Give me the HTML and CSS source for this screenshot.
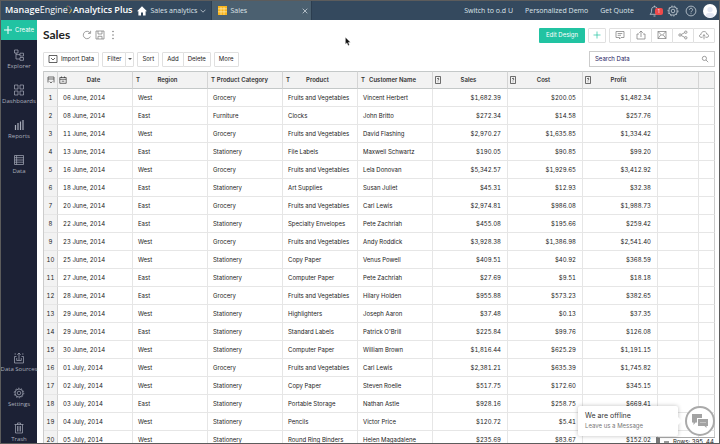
FILE: index.html
```
<!DOCTYPE html>
<html lang="en">
<head>
  <meta charset="UTF-8">
  <meta name="viewport" content="width=device-width, initial-scale=1">
  <title>Sales - Analytics Plus</title>
  <link rel="stylesheet" href="styles.css">
</head>
<body>

  <header class="topbar">
    <a class="brand" href="#"><span>Manage</span><span class="brand-light">Engine</span><svg class="brand-arc" viewBox="0 0 10 12"><path d="M1 3 A5 5 0 0 1 4 1" stroke="#2f9e5b"/><path d="M3 1 Q6 1 7 4" stroke="#d9433b"/><path d="M5 1 Q8 2 8 6" stroke="#2d8fc4"/><path d="M8 5 Q8 9 5 10" stroke="#f0c237"/></svg><span>Analytics Plus</span></a>
    <a class="home" href="#" aria-label="Home"><svg viewBox="0 0 10 10"><path d="M5 0.3 L10 5.2 H8.6 V9.6 H6 V6.5 H4 V9.6 H1.4 V5.2 H0 Z" fill="#fff"/></svg></a>
    <button class="workspace">Sales analytics <svg viewBox="0 0 6 4"><path d="M0.5 0.7 L3 3.2 L5.5 0.7"/></svg></button>
    <div class="tab">
      <svg class="tab-icon" viewBox="0 0 9 9"><rect width="9" height="9" fill="#f9b51c"/><path d="M0 2.8 H9 M0 5.8 H9 M3 1 V9 M6 1 V9" stroke="#fff0c2" stroke-width=".6"/></svg>
      <span>Sales</span>
      <button class="tab-close" aria-label="Close tab"><svg viewBox="0 0 6 6"><path d="M0.7 0.7 L5.3 5.3 M5.3 0.7 L0.7 5.3"/></svg></button>
    </div>
    <nav class="top-links">
      <a href="#">Switch to o.d U</a>
      <a href="#">Personalized Demo</a>
      <a href="#">Get Quote</a>
    </nav>
    <div class="top-icons">
      <button class="bell" aria-label="Notifications"><svg viewBox="0 0 12 12"><path d="M1 9.3 H10 C8.6 8 8.6 7 8.6 5 C8.6 3 7.5 1.8 5.5 1.8 C3.5 1.8 2.6 3 2.6 5 C2.6 7 2.5 8 1 9.3 Z M4.5 11 H6.5 M5.5 .6 V1.8"/></svg><span class="badge">1</span></button>
      <button aria-label="Settings"><svg viewBox="0 0 12 12"><circle cx="6" cy="6" r="4.1"/><circle cx="6" cy="6" r="1.8"/><circle class="teeth" cx="6" cy="6" r="5"/></svg></button>
      <button aria-label="Help"><svg viewBox="0 0 12 12"><circle cx="6" cy="6" r="4.9"/><path d="M4.4 4.8 C4.4 2.7 7.6 2.7 7.6 4.7 C7.6 6 6 5.9 6 7.3 M6 8.3 V9.1"/></svg></button>
      <button class="avatar" aria-label="Account"><svg viewBox="0 0 14 14"><circle cx="7" cy="7" r="7" fill="#fff"/><circle cx="7" cy="5.5" r="2.6" fill="#e4e8f3"/><path d="M2.5 12 Q3 8.8 7 8.8 Q11 8.8 11.5 12 Q7 15 2.5 12" fill="#e4e8f3"/></svg></button>
    </div>
  </header>

  <div class="layout">
    <aside class="sidebar">
      <button class="create"><svg viewBox="0 0 8 8"><path d="M4 0 V8 M0 4 H8"/></svg>Create</button>
      <nav class="side-nav">
        <a href="#"><svg viewBox="0 0 12 12"><path d="M1.5 1 H5 V4 H1.5 Z M7 4.2 H10.5 V7 H7 Z M7 8.5 H10.5 V11.3 H7 Z M3 4 V10 H7 M3 5.6 H7"/></svg>Explorer</a>
        <a href="#"><svg viewBox="0 0 12 12"><path d="M1.5 1 H5 V5 H1.5 Z M7 1 H10.5 V5 H7 Z M1.5 7 H5 V11 H1.5 Z M7 7 H10.5 V11 H7 Z"/></svg>Dashboards</a>
        <a href="#"><svg viewBox="0 0 12 12"><path class="bars" d="M2.5 11 V6 M5 11 V4 M7.5 11 V2.5 M10 11 V1"/></svg>Reports</a>
        <a href="#"><svg viewBox="0 0 12 12"><path d="M1.5 1.5 H10.5 V10.5 H1.5 Z M1.5 3.7 H10.5 M1.5 6 H10.5 M1.5 8.2 H10.5 M3.6 1.5 V10.5"/></svg>Data</a>
      </nav>
      <nav class="side-nav side-bottom">
        <a href="#"><svg viewBox="0 0 12 12"><path d="M3.5 4.5 H1.5 V11 H10.5 V4.5 H8.5 M6 1 V8 M4.3 2.7 L6 1 L7.7 2.7 M3.7 6 V8.5 H8.3 V6 M1.5 2 H3 M9 2 H10.5"/></svg>Data Sources</a>
        <a href="#"><svg viewBox="0 0 12 12"><circle cx="6" cy="6" r="4"/><circle cx="6" cy="6" r="1.8"/><circle class="teeth" cx="6" cy="6" r="4.8"/></svg>Settings</a>
        <a href="#"><svg viewBox="0 0 12 12"><path d="M1.5 2.5 H10.5 M4.5 2.5 V1 H7.5 V2.5 M2.5 2.5 V11 H9.5 V2.5 M4.5 4 V9.5 M6 4 V9.5 M7.5 4 V9.5"/></svg>Trash</a>
      </nav>
    </aside>

    <main class="content">
      <div class="title-row">
        <h1>Sales</h1>
        <div class="title-icons">
          <button aria-label="Refresh"><svg viewBox="0 0 10 10"><path d="M8.4 6.5 A3.7 3.7 0 1 1 8 2.8 M8.6 .8 V3.4 H6"/></svg></button>
          <button aria-label="Save"><svg viewBox="0 0 10 10"><path d="M1 1 H9 V9 H1 Z M3 1 V4 H7 V1 M3 9 V6.3 H7 V9"/></svg></button>
          <button aria-label="More options"><svg viewBox="0 0 10 10"><path class="dots" d="M5 1.5 H5.01 M5 5 H5.01 M5 8.5 H5.01"/></svg></button>
        </div>
        <div class="actions">
          <button class="edit">Edit Design</button>
          <button class="btn add" aria-label="Add"><svg viewBox="0 0 10 10"><path d="M5 1.5 V8.5 M1.5 5 H8.5"/></svg></button>
          <div class="group">
            <button class="btn" aria-label="Comments"><svg viewBox="0 0 10 10"><path d="M1 1.5 H9 V7.5 H6 L4.5 9 V7.5 H1 Z M2.7 3.5 H7.3 M2.7 5.3 H6"/></svg></button>
            <button class="btn" aria-label="Export"><svg viewBox="0 0 10 10"><path d="M3 4 H1 V9 H9 V4 H7 M5 7 V1 M3.2 2.8 L5 1 L6.8 2.8"/></svg></button>
            <button class="btn" aria-label="Email"><svg viewBox="0 0 10 10"><path d="M1 1.5 H9 V8.5 H1 Z M1 1.5 L5 5.5 L9 1.5 M1 8.5 L4 4.7 M9 8.5 L6 4.7"/></svg></button>
            <button class="btn" aria-label="Share"><svg viewBox="0 0 10 10"><circle cx="2" cy="5" r="1.2"/><circle cx="7.8" cy="2.2" r="1.2"/><circle cx="7.8" cy="7.8" r="1.2"/><path d="M3.1 4.5 L6.7 2.7 M3.1 5.5 L6.7 7.3"/></svg></button>
            <button class="btn" aria-label="Publish"><svg viewBox="0 0 10 10"><path d="M3.5 7.3 H2 C0 7.3 0 4.4 2.1 4.4 C2.1 .6 7.7 .6 7.8 4.2 C10.2 4.2 10.2 7.3 8 7.3 H6.5 M5 9.3 V4.7 M3.6 6 L5 4.7 L6.4 6"/></svg></button>
          </div>
        </div>
      </div>

      <div class="toolbar">
        <button class="btn import"><svg viewBox="0 0 10 10"><path d="M1 1.5 H9 V8.5 H1 Z M3 4 L5 6 L7 4"/></svg>Import Data</button>
        <div class="group">
          <button class="btn">Filter</button>
          <button class="btn caret" aria-label="Filter options"></button>
        </div>
        <button class="btn">Sort</button>
        <div class="group">
          <button class="btn">Add</button>
          <button class="btn">Delete</button>
        </div>
        <button class="btn">More</button>
        <label class="search">
          <input type="search" placeholder="Search Data" aria-label="Search Data">
          <svg viewBox="0 0 8 8"><circle cx="3.4" cy="3.4" r="2.1"/><path d="M5 5 L7.2 7.2"/></svg>
        </label>
      </div>

      <div class="grid">
        <table>
          <colgroup><col class="c-num"><col><col><col><col><col><col><col><col><col class="c-blank"><col class="c-end"></colgroup>
          <thead>
            <tr>
              <th class="num" aria-label="Row"><svg viewBox="0 0 8 8"><path d="M1 6.5 V1 H7 V6.5 M1 3 H7 M2.7 5.5 L4 7 L5.3 5.5"/></svg></th>
              <th><div><svg viewBox="0 0 8 8"><path d="M.8 1.5 H7.2 V7.3 H.8 Z M.8 3.3 H7.2 M2.5 .5 V2 M5.5 .5 V2 M2.7 5.2 H5.3"/></svg><span>Date</span></div></th>
              <th><div><i>T</i><span>Region</span></div></th>
              <th><div><i>T</i><span>Product Category</span></div></th>
              <th><div><i>T</i><span>Product</span></div></th>
              <th><div><i>T</i><span>Customer Name</span></div></th>
              <th><div><svg viewBox="0 0 8 8"><path d="M1.5 .5 H6.5 V7.5 H1.5 Z M3 2.8 Q4.8 1.3 4.8 3 Q4.5 4 4 4.5 M4 5.6 V6.2"/></svg><span>Sales</span></div></th>
              <th><div><svg viewBox="0 0 8 8"><path d="M1.5 .5 H6.5 V7.5 H1.5 Z M3 2.8 Q4.8 1.3 4.8 3 Q4.5 4 4 4.5 M4 5.6 V6.2"/></svg><span>Cost</span></div></th>
              <th><div><svg viewBox="0 0 8 8"><path d="M1.5 .5 H6.5 V7.5 H1.5 Z M3 2.8 Q4.8 1.3 4.8 3 Q4.5 4 4 4.5 M4 5.6 V6.2"/></svg><span>Profit</span></div></th>
              <th></th>
              <th></th>
            </tr>
          </thead>
          <tbody>
            <tr><td>1</td><td>06 June, 2014</td><td>West</td><td>Grocery</td><td>Fruits and Vegetables</td><td>Vincent Herbert</td><td>$1,682.39</td><td>$200.05</td><td>$1,482.34</td><td></td><td></td></tr>
            <tr><td>2</td><td>08 June, 2014</td><td>East</td><td>Furniture</td><td>Clocks</td><td>John Britto</td><td>$272.34</td><td>$14.58</td><td>$257.76</td><td></td><td></td></tr>
            <tr><td>3</td><td>11 June, 2014</td><td>West</td><td>Grocery</td><td>Fruits and Vegetables</td><td>David Flashing</td><td>$2,970.27</td><td>$1,635.85</td><td>$1,334.42</td><td></td><td></td></tr>
            <tr><td>4</td><td>13 June, 2014</td><td>East</td><td>Stationery</td><td>File Labels</td><td>Maxwell Schwartz</td><td>$190.05</td><td>$90.85</td><td>$99.20</td><td></td><td></td></tr>
            <tr><td>5</td><td>16 June, 2014</td><td>West</td><td>Grocery</td><td>Fruits and Vegetables</td><td>Lela Donovan</td><td>$5,342.57</td><td>$1,929.65</td><td>$3,412.92</td><td></td><td></td></tr>
            <tr><td>6</td><td>18 June, 2014</td><td>East</td><td>Stationery</td><td>Art Supplies</td><td>Susan Juliet</td><td>$45.31</td><td>$12.93</td><td>$32.38</td><td></td><td></td></tr>
            <tr><td>7</td><td>20 June, 2014</td><td>East</td><td>Grocery</td><td>Fruits and Vegetables</td><td>Carl Lewis</td><td>$2,974.81</td><td>$986.08</td><td>$1,988.73</td><td></td><td></td></tr>
            <tr><td>8</td><td>22 June, 2014</td><td>East</td><td>Stationery</td><td>Specialty Envelopes</td><td>Pete Zachriah</td><td>$455.08</td><td>$195.66</td><td>$259.42</td><td></td><td></td></tr>
            <tr><td>9</td><td>23 June, 2014</td><td>West</td><td>Grocery</td><td>Fruits and Vegetables</td><td>Andy Roddick</td><td>$3,928.38</td><td>$1,386.98</td><td>$2,541.40</td><td></td><td></td></tr>
            <tr><td>10</td><td>25 June, 2014</td><td>West</td><td>Stationery</td><td>Copy Paper</td><td>Venus Powell</td><td>$409.51</td><td>$40.92</td><td>$368.59</td><td></td><td></td></tr>
            <tr><td>11</td><td>27 June, 2014</td><td>East</td><td>Stationery</td><td>Computer Paper</td><td>Pete Zachriah</td><td>$27.69</td><td>$9.51</td><td>$18.18</td><td></td><td></td></tr>
            <tr><td>12</td><td>28 June, 2014</td><td>East</td><td>Grocery</td><td>Fruits and Vegetables</td><td>Hilary Holden</td><td>$955.88</td><td>$573.23</td><td>$382.65</td><td></td><td></td></tr>
            <tr><td>13</td><td>29 June, 2014</td><td>West</td><td>Stationery</td><td>Highlighters</td><td>Joseph Aaron</td><td>$37.48</td><td>$0.13</td><td>$37.35</td><td></td><td></td></tr>
            <tr><td>14</td><td>29 June, 2014</td><td>East</td><td>Stationery</td><td>Standard Labels</td><td>Patrick O'Brill</td><td>$225.84</td><td>$99.76</td><td>$126.08</td><td></td><td></td></tr>
            <tr><td>15</td><td>30 June, 2014</td><td>West</td><td>Stationery</td><td>Computer Paper</td><td>William Brown</td><td>$1,816.44</td><td>$625.29</td><td>$1,191.15</td><td></td><td></td></tr>
            <tr><td>16</td><td>01 July, 2014</td><td>West</td><td>Grocery</td><td>Fruits and Vegetables</td><td>Carl Lewis</td><td>$2,381.21</td><td>$635.39</td><td>$1,745.82</td><td></td><td></td></tr>
            <tr><td>17</td><td>02 July, 2014</td><td>West</td><td>Stationery</td><td>Copy Paper</td><td>Steven Roelle</td><td>$517.75</td><td>$172.60</td><td>$345.15</td><td></td><td></td></tr>
            <tr><td>18</td><td>03 July, 2014</td><td>East</td><td>Stationery</td><td>Portable Storage</td><td>Nathan Astle</td><td>$928.16</td><td>$258.75</td><td>$669.41</td><td></td><td></td></tr>
            <tr><td>19</td><td>04 July, 2014</td><td>West</td><td>Stationery</td><td>Pencils</td><td>Victor Price</td><td>$120.72</td><td>$5.41</td><td></td><td></td><td></td></tr>
            <tr><td>20</td><td>05 July, 2014</td><td>West</td><td>Stationery</td><td>Round Ring Binders</td><td>Helen Magadalene</td><td>$235.69</td><td>$83.67</td><td>$152.02</td><td></td><td></td></tr>
          </tbody>
        </table>
      </div>
    </main>
  </div>

  <div class="row-status"><span class="status-box"></span>Rows: 395, 44</div>

  <!-- chat widget -->
  <div class="chat">
    <div class="chat-bubble">
      <strong>We are offline</strong>
      <span>Leave us a Message</span>
    </div>
    <button class="chat-btn" aria-label="Chat"><svg viewBox="0 0 16 14"><path d="M0 0 H10 V4 H5 V8.5 H3.5 L1.5 11 V8.5 H0 Z" fill="#a3a3a3"/><path d="M6 5 H16 V12 H14.5 V14 L12.5 12 H6 Z" fill="#a3a3a3"/><path d="M8.5 8.5 H9.5 M10.5 8.5 H11.5 M12.5 8.5 H13.5" stroke="#fff"/></svg></button>
  </div>

  <svg class="pointer" viewBox="0 0 6 9"><path d="M.5 .5 V7 L2 5.7 L3.2 8.4 L4.3 7.9 L3.2 5.3 H5.3 Z" fill="#111" stroke="#ccc" stroke-width=".3"/></svg>

</body>
</html>
```
FILE: styles.css
```
* {
  box-sizing: border-box;
}

body {
  margin: 0;
  height: 100vh;
  display: flex;
  flex-direction: column;
  overflow: hidden;
  border: 1px solid #5c5c5c;
  background: #fff;
  color: #222;
  font: 6px/8px Inter, "Open Sans", sans-serif;
}

button,
input {
  font: inherit;
  color: inherit;
}

button {
  display: flex;
  align-items: center;
  justify-content: center;
  padding: 0;
  border: none;
  background: none;
  white-space: nowrap;
  cursor: pointer;
}

a {
  color: inherit;
  text-decoration: none;
}

svg {
  display: block;
  flex: none;
  fill: none;
  stroke: currentColor;
  stroke-width: .7;
}

.teeth {
  stroke-dasharray: 1.5 1.5;
}

/* top bar */
.topbar {
  flex: none;
  display: flex;
  align-items: center;
  height: 19px;
  background: #34495e;
  color: #dde4ea;
  font-family: "Open Sans", sans-serif;
  font-size: 7px;
}

.brand {
  display: flex;
  align-items: center;
  padding: 0 0 2px 4px;
  color: #fff;
  font-size: 9px;
  font-weight: 600;
}

.brand-light {
  font-weight: normal;
}

.brand-arc {
  width: 8px;
  height: 12px;
  margin-left: -3px;
  stroke-width: 1.2;
}

.home {
  margin: 0 4px;
}

.home svg {
  width: 10px;
  height: 10px;
  stroke: none;
}

.workspace {
  gap: 3px;
}

.workspace svg {
  width: 6px;
  height: 4px;
}

.tab {
  display: flex;
  align-items: center;
  gap: 3px;
  width: 101px;
  height: 100%;
  margin-left: 5px;
  padding: 0 3px 0 6px;
  background: #4b6070;
  border-left: 1px solid #2c3e50;
  border-right: 1px solid #2c3e50;
}

.tab-icon {
  width: 9px;
  height: 9px;
  stroke: none;
}

.tab-close {
  margin-left: auto;
}

.tab-close svg {
  width: 6px;
  height: 6px;
}

.top-links {
  display: flex;
  gap: 12px;
  margin-left: auto;
}

.top-icons {
  display: flex;
  align-items: center;
  gap: 6px;
  margin: 0 2px 0 15px;
}

.top-icons svg {
  width: 12px;
  height: 12px;
}

.bell {
  position: relative;
}

.badge {
  position: absolute;
  left: 6px;
  top: 3px;
  width: 8px;
  height: 7px;
  border-radius: 2px;
  background: #ee4a4a;
  color: #fff;
  font-size: 5px;
  line-height: 7px;
}

.top-icons .avatar svg {
  width: 14px;
  height: 14px;
  stroke: none;
}

/* left menu */
.layout {
  flex: 1;
  min-height: 0;
  display: flex;
}

.sidebar {
  flex: none;
  width: 36px;
  display: flex;
  flex-direction: column;
  background: #1c2135;
  color: #a9aebb;
}

.create {
  flex: none;
  height: 20px;
  gap: 3px;
  background: #21c3a2;
  color: #fff;
}

.create svg {
  width: 8px;
  height: 8px;
  stroke-width: 1;
}

.side-nav {
  display: flex;
  flex-direction: column;
  gap: 14px;
  padding-top: 9px;
  font-family: "Open Sans", sans-serif;
}

.side-nav a {
  display: flex;
  flex-direction: column;
  align-items: center;
  gap: 1px;
  white-space: nowrap;
}

.side-nav svg {
  width: 12px;
  height: 12px;
}

.side-nav .bars {
  stroke-width: 1.2;
}

.side-bottom {
  margin-top: auto;
}

/* main area */
.content {
  flex: 1;
  min-width: 0;
  display: flex;
  flex-direction: column;
  padding: 6px 4px 0 6px;
}

.title-row {
  display: flex;
  align-items: center;
  height: 18px;
}

h1 {
  margin: 0;
  font-family: Lato, sans-serif;
  font-size: 12px;
  line-height: 18px;
}

.title-icons {
  display: flex;
  gap: 3px;
  margin-left: 12px;
  color: #777;
}

.title-icons svg {
  width: 10px;
  height: 10px;
}

.dots {
  stroke-width: 1.5;
  stroke-linecap: round;
}

.actions {
  display: flex;
  gap: 3px;
  margin-left: auto;
}

.edit {
  width: 46px;
  height: 15px;
  border-radius: 1px;
  background: #21c3a2;
  color: #fff;
}

.btn {
  height: 15px;
  padding: 0 5px;
  border: 1px solid #e0e0e0;
  border-radius: 1px;
}

.btn svg {
  width: 10px;
  height: 10px;
}

.actions .btn {
  width: 18px;
  padding: 0;
  color: #777;
}

.actions .group .btn {
  width: 22px;
}

.actions .add {
  color: #21c3a2;
}

.group {
  display: flex;
}

.group .btn + .btn {
  margin-left: -1px;
}

.toolbar {
  display: flex;
  align-items: center;
  gap: 3px;
  margin-top: 7px;
  height: 16px;
}

.toolbar .btn {
  padding: 0 4px;
}

.import {
  gap: 3px;
}

.toolbar .caret {
  width: 9px;
  padding: 0;
}

.caret::before {
  content: "";
  border: 2px solid transparent;
  border-top-color: #555;
  border-bottom: 0;
}

.search {
  display: flex;
  align-items: center;
  width: 126px;
  height: 16px;
  margin-left: auto;
  padding: 0 5px;
  border: 1px solid #ccc;
}

.search input {
  flex: 1;
  min-width: 0;
  padding: 0;
  border: none;
  outline: none;
  background: none;
}

.search input::placeholder {
  color: #262262;
  opacity: 1;
}

.search svg {
  width: 8px;
  height: 8px;
  color: #777;
}

/* data table */
.grid {
  flex: 1;
  min-height: 0;
  margin-top: 4px;
  overflow: hidden;
}

table {
  width: 100%;
  table-layout: fixed;
  border-collapse: separate;
  border-spacing: 0;
  border-left: 1px solid #ccc;
  font-variant-numeric: tabular-nums;
}

.c-num {
  width: 14px;
}

.c-blank {
  width: 41px;
}

.c-end {
  width: 16px;
}

th,
td {
  padding: 0;
  border-right: 1px solid #e6e6e6;
  border-bottom: 1px solid #e6e6e6;
  text-align: left;
  white-space: nowrap;
}

th {
  height: 18px;
  background: #f2f2f2;
  border-top: 1px solid #c4c8c8;
  border-right-color: #d4d4d4;
  border-bottom-color: #c4c8c8;
  color: #333;
  font-weight: 600;
}

th div {
  display: flex;
  align-items: center;
  padding: 0 12px 0 1px;
}

th svg {
  width: 8px;
  height: 8px;
}

th.num svg {
  margin: 0 auto;
}

th i {
  padding-left: 2px;
  font-style: normal;
}

th span {
  flex: 1;
  text-align: center;
}

td {
  height: 18px;
  padding-left: 5px;
}

td:first-child {
  padding: 0;
  background: #f2f2f2;
  border-right-color: #d4d4d4;
  text-align: center;
}

td:nth-child(n+7) {
  padding: 0 6px 0 0;
  text-align: right;
}

td:last-child,
th:last-child {
  border-right-color: #ccc;
}

/* bottom right overlays */
.row-status {
  position: absolute;
  right: 5px;
  bottom: 1px;
  width: 59px;
  height: 6px;
  display: flex;
  gap: 4px;
  padding-left: 4px;
  overflow: hidden;
  border-top: 1px solid #aaa;
  border-left: 4px solid #777;
  background: #fff;
}

.status-box {
  width: 5px;
  height: 5px;
  margin-top: 3px;
  background: #999;
}

.chat {
  position: absolute;
  right: 5px;
  bottom: 8px;
  display: flex;
  align-items: center;
  gap: 7px;
}

.chat-bubble {
  position: relative;
  display: flex;
  flex-direction: column;
  gap: 2px;
  width: 100px;
  padding: 6px 7px;
  border-radius: 2px;
  background: #fff;
  box-shadow: 0 0 4px rgba(0, 0, 0, .25);
  color: #777;
}

.chat-bubble::after {
  content: "";
  position: absolute;
  right: -4px;
  top: 11px;
  border: 4px solid transparent;
  border-left-color: #fff;
  border-right: 0;
}

.chat-bubble strong {
  color: #333;
  font-size: 7px;
  font-weight: normal;
}

.chat-btn {
  width: 30px;
  height: 30px;
  border: 2px solid #aaa;
  border-radius: 50%;
  background: #fff;
}

.chat-btn svg {
  width: 16px;
  height: 14px;
  stroke: none;
}

.pointer {
  position: absolute;
  left: 345px;
  top: 37px;
  width: 6px;
  height: 9px;
}
```
